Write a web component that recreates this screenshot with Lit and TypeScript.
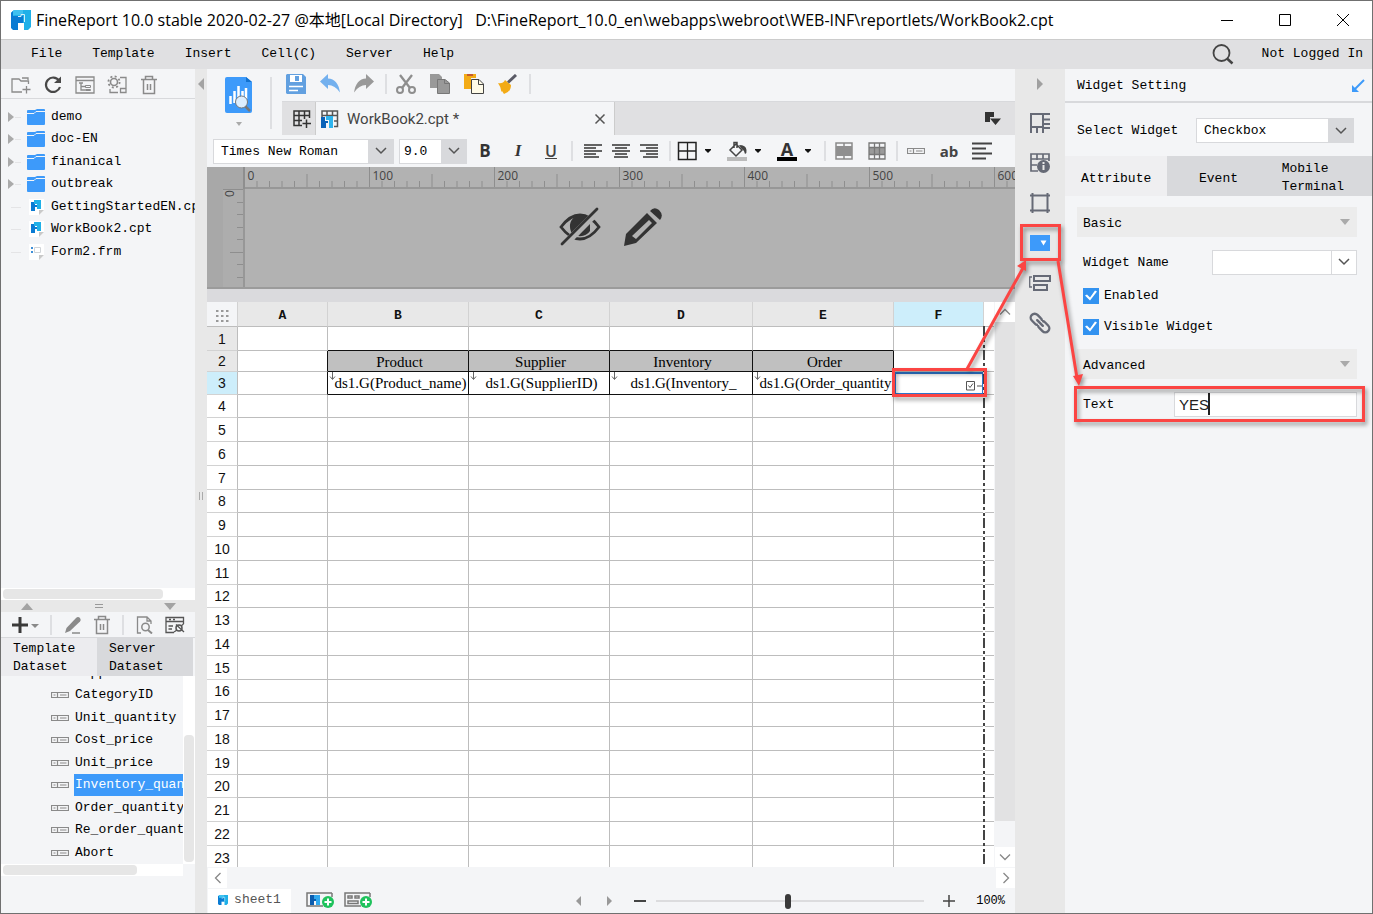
import { LitElement, html, css, svg, nothing } from "lit";
import { customElement, state } from "lit/decorators.js";
import { classMap } from "lit/directives/class-map.js";

const ico = (w: number, h: number, body: unknown) =>
  html`<svg width=${w} height=${h} viewBox="0 0 ${w} ${h}" fill="none" aria-hidden="true">${body}</svg>`;

const logoBody = svg`
  <path fill="#1fb0e8" d="M3 0H20V17L17 20H13V13H7L0 6V3Z"/>
  <path fill="#3fc1f0" d="M3 0H12V5H4L0 6V3Z"/>
  <path fill="#0a7bd3" d="M0 3 2 1V6H12V13H7V20H2L0 18Z"/>
  <path fill="none" stroke="#d5effb" stroke-width="1" d="M7 6.500H10V4.500H13.500V12"/>`;
const logo = (s: number) =>
  html`<svg width=${s} height=${s} viewBox="0 0 20 20" aria-hidden="true">${logoBody}</svg>`;

const chevron = html`<svg class="chev" width="12" height="8" viewBox="0 0 12 8" fill="none" aria-hidden="true"><path d="M1 1 6 6 11 1" stroke="#555" stroke-width="1.5"/></svg>`;
const caret = ico(10, 6, svg`<path d="M2 1H8V2L5 5 2 2Z" fill="#111"/>`);

const folderIcon = ico(18, 16, svg`<path fill="#3d9afa" d="M0 2Q0 1 1 1H8L10 0H17Q18 0 18 1V15Q18 16 17 16H1Q0 16 0 15Z"/><path stroke="#f4f5f7" d="M0 4.500H7L9 2.500H18"/>`);
const cptIcon = ico(16, 16, svg`<path fill="#fff" d="M1 0H16V11L11 16H1Z"/><path fill="#c9c9c9" d="M16 11 11 16V11Z"/>
  <path fill="#0a7bd3" d="M3 3H7V6H9V8H7V12H3Z"/><path fill="#1fb0e8" d="M6 1H13V10H9V5H6Z"/>`);
const frmIcon = ico(16, 16, svg`<path fill="#fff" d="M1 0H16V11L11 16H1Z"/><path fill="#c9c9c9" d="M16 11 11 16V11Z"/>
  <path fill="#3d8fd8" d="M3 3H5V5H3ZM3 7H5V9H3Z"/><path stroke="#d0d4d8" d="M6.500 3.500H12.500V8.500H6.500Z"/>`);
const fieldIcon = ico(18, 8, svg`<path stroke="#8a8a8a" stroke-width="1.200" d="M.5 1.500H17.500V6.500H.5ZM6.500 1.500V6.500M2.500 4H4.500M9 4H15.500"/>`);
const trashIcon = ico(18, 20, svg`<path stroke="#8a8a8a" stroke-width="1.500" d="M1 4.500H17M5.500 4V1.500H12.500V4M3.500 5V18.500H14.500V5M7.500 9V15M10.500 9V15"/>`);

const icons = {
  newFolder: ico(20, 18, svg`<path stroke="#8a8a8a" stroke-width="1.300" d="M11 16H1V3H8L10 5H17.500V8M11 2H17V4M15.500 10V17.500M11.500 13.500H19.500"/>`),
  refresh: ico(20, 20, svg`<path stroke="#484848" stroke-width="2.200" d="M16 5.500A7.200 7.200 0 1 0 17 12"/><path fill="#484848" d="M18 1.500V8H11Z"/>`),
  treeView: ico(20, 18, svg`<path stroke="#8a8a8a" stroke-width="1.300" d="M1 1H19V17H1ZM1 4.500H19M6 7V14H10M6 10.500H11M4 7H8"/><path stroke="#8a8a8a" d="M10.500 9.500H15.500V11.500H10.500ZM10.500 13.500H15.500V14.500H10.500Z"/>`),
  gear: ico(20, 20, svg`<circle cx="7" cy="7" r="3.500" stroke="#8a8a8a" stroke-width="1.600"/><circle cx="7" cy="7" r="5.600" stroke="#8a8a8a" stroke-width="1.800" stroke-dasharray="2 2.400"/><path stroke="#8a8a8a" stroke-width="1.300" d="M13 2.500H19V17.500H13.500V13.500H19M3 14V17.500H11"/>`),
  plus: ico(28, 18, svg`<path stroke="#3a3a3a" stroke-width="3" d="M9 1V17M1 9H17"/><path fill="#8a8a8a" d="M20 8H28L24 12Z"/>`),
  pen: ico(18, 18, svg`<path fill="#8a8a8a" d="M1 17 2.500 12 12 2Q14 0 16 2 17.500 4 16 5.500L6 15Z"/><path stroke="#8a8a8a" stroke-width="1.500" d="M8 17H16"/>`),
  docSearch: ico(18, 18, svg`<path stroke="#8a8a8a" stroke-width="1.300" d="M5 17H1.500V1H11L15 5V8M11 1V5H15"/><circle cx="9.500" cy="11" r="3.700" stroke="#8a8a8a" stroke-width="1.500"/><path stroke="#8a8a8a" stroke-width="2" d="M12 14 16 17.500"/>`),
  dbLink: ico(20, 18, svg`<path stroke="#555" stroke-width="1.300" d="M18.500 8V1.500H1V16.500H9M1 5.500H18M3.500 10H8M3.500 13H7M4 3.500H6M8 3.500H10"/><circle cx="14" cy="12" r="3" stroke="#555" stroke-width="1.500"/><path stroke="#555" stroke-width="1.300" d="M9 16 12 14M11 8.500 19 16M16 10 18.500 8"/>`),
  save: ico(20, 20, svg`<path fill="#62a0e0" d="M1 0H17L20 3V20H1L0 19V1Z"/><path fill="#fff" d="M4 1H16V8H4Z"/><path fill="#62a0e0" d="M9 2H13V7H9Z"/><path stroke="#fff" stroke-width="1.500" d="M3 12.500H17M3 16.500H12"/>`),
  undo: ico(20, 20, svg`<path fill="#73b0ee" d="M0 7.500 8 0V4.500Q18 5 20 18.500 15 11 8 11V15Z"/>`),
  redo: ico(20, 20, svg`<path fill="#999" d="M20 7.500 12 0V4.500Q2 5 0 18.500 5 11 12 11V15Z"/>`),
  cut: ico(20, 20, svg`<circle cx="4" cy="16" r="3" stroke="#8e8e8e" stroke-width="2"/><circle cx="16" cy="16" r="3" stroke="#8e8e8e" stroke-width="2"/><path stroke="#8e8e8e" stroke-width="2.300" d="M4 1 14 14M16 1 6 14"/>`),
  copy: ico(20, 20, svg`<path fill="#999" d="M0 0H9L12 3V14H0Z"/><path fill="#999" stroke="#777" d="M7.500 5.500H15L19.500 9V19.500H7.500Z"/><path stroke="#777" d="M14.500 6V9.500H19"/>`),
  paste: ico(20, 20, svg`<path fill="#f3ab16" d="M0 0H12V4H7V15H0Z"/><path fill="#c55b2c" d="M3 0H9V2H3Z"/><path fill="#fffbe8" stroke="#444" d="M7.500 5.500H15L19.500 10V19.500H7.500Z"/><path stroke="#444" d="M14.500 6V10.500H19"/>`),
  brush: ico(20, 20, svg`<path fill="#f3ab16" d="M0 9Q5 10 7 6L13 11Q13 18 6 20L4 17 3.500 18Q3 13 0 9Z"/><path stroke="#5a5a66" stroke-width="3" d="M10 8.500 18 1"/>`),
  gridAdd: ico(18, 18, svg`<path stroke="#333" stroke-width="1.500" d="M9 15.500H1V1H16.500V8M1 5.500H16.500M1 10.500H9M6 1V15.500M11.500 1V9M13.500 9.500V18M9.500 13.500H18"/>`),
  gridFile: ico(18, 18, svg`<path stroke="#555" stroke-width="1.500" d="M1 7V1H16.500V16.500H13M1 5.500H16.500M6 1V6M11.500 1V6M13 11H16.500"/><path fill="#0b62b8" d="M0 7H4V11H7V13H5V18H0Z"/><path fill="#2fb4ee" d="M5 6H12V18H8V10H5Z"/>`),
  alignL: ico(18, 16, svg`<path stroke="#333" stroke-width="1.300" d="M0 2H18M0 5H12M0 8H18M0 11H12M0 14H15"/>`),
  alignC: ico(18, 16, svg`<path stroke="#333" stroke-width="1.300" d="M0 2H18M3 5H15M0 8H18M3 11H15M2 14H16"/>`),
  alignR: ico(18, 16, svg`<path stroke="#333" stroke-width="1.300" d="M0 2H18M6 5H18M0 8H18M6 11H18M3 14H18"/>`),
  border: ico(20, 20, svg`<path stroke="#222" stroke-width="1.500" d="M1.500 1.500H19V18.500H1.500Z"/><path stroke="#222" stroke-width="1.300" d="M10.500 1V19M2 10H19"/>`),
  fill: ico(20, 20, svg`<path stroke="#444" stroke-width="1.500" d="M9 3 3 9 9 15 15 9ZM7 7V1.500H10V7"/><path fill="#444" d="M12 4Q19 4 19.500 9 20 12 18 13 17 9 14 7Z"/><path fill="#bbb" d="M0 16H20V20H0Z"/>`),
  merge: ico(18, 18, svg`<path stroke="#8a8a8a" stroke-width="1.500" d="M1 1H17V17H1ZM9 1V4M9 14V17"/><path fill="#8f8f8f" d="M1 4H17V14H1Z"/>`),
  unmerge: ico(18, 18, svg`<path fill="#9a9a9a" d="M1 5H17V13H1Z"/><path stroke="#777" stroke-width="1.300" d="M1 1H17V17H1ZM1 5.500H17M1 12.500H17M6.500 1V17M11.500 1V17"/>`),
  para: ico(20, 18, svg`<path stroke="#444" stroke-width="2" d="M0 1.500H20M0 6.500H14M0 11.500H20M0 16.500H14"/>`),
  tabMenu: ico(16, 14, svg`<path fill="#333" d="M0 0H9V5H5V10H0ZM5 6.500H16L10.500 13Z"/>`),
  close: ico(12, 12, svg`<path stroke="#555" stroke-width="1.500" d="M1.500 1.500 10.500 10.500M10.500 1.500 1.500 10.500"/>`),
};

const railIcons = [
  ["Cell attributes", ico(22, 22, svg`<path stroke="#666a76" stroke-width="2" d="M21 2H2V21M2 15H14V2M14 7.500H21M14 12H21M14 16H21M8 15V21M14 15V21"/>`)],
  ["Cell elements", ico(22, 22, svg`<path stroke="#666a76" stroke-width="1.700" d="M9 19H2V2H20V9M2 7H20M2 13H8M8 2V8M14 2V7"/><circle cx="14.500" cy="14.500" r="6.500" fill="#666a76"/><path stroke="#e8e8e8" stroke-width="2" d="M14.500 13V18M14.500 10V12"/>`)],
  ["Floating elements", ico(22, 22, svg`<path stroke="#666a76" stroke-width="2" d="M1 3.500H21M1 18.500H21M3.500 1V21M18.500 1V21"/>`)],
  ["Widget settings", ico(20, 16, svg`<path fill="#3d9afa" d="M0 0H20V16H0Z"/><path fill="#fff" d="M10.500 5.500H16.500L13.500 10.500Z"/>`)],
  ["Condition attributes", ico(22, 18, svg`<path stroke="#666a76" stroke-width="1.300" d="M3 3H.7V13H3"/><path stroke="#666a76" stroke-width="2" d="M5 2H21V7H5ZM5 11H18V16H5Z"/>`)],
  ["Hyperlink", ico(22, 22, svg`<g stroke="#666a76" stroke-width="2.400" stroke-linecap="round" transform="rotate(45 11 11)"><path d="M10 7.500A3.500 3.500 0 0 0 8 7H3.500A4 4 0 0 0 3.500 15H8A3.500 3.500 0 0 0 10 14.500M12 7.500A3.500 3.500 0 0 1 14 7H18.500A4 4 0 0 1 18.500 15H14A3.500 3.500 0 0 1 12 14.500M7 11H15"/></g>`)],
] as const;

const COLS = ["A", "B", "C", "D", "E", "F"];
const CELLS: Record<string, string> = {
  B2: "Product", C2: "Supplier", D2: "Inventory", E2: "Order",
  B3: "ds1.G(Product_name)", C3: "ds1.G(SupplierID)", D3: "ds1.G(Inventory_", E3: "ds1.G(Order_quantity",
};
const FIELDS = ["SupplierID", "CategoryID", "Unit_quantity", "Cost_price", "Unit_price", "Inventory_quantity", "Order_quantity", "Re_order_quantity", "Abort"];
const TREE = [
  ["demo", "dir"], ["doc-EN", "dir"], ["finanical", "dir"], ["outbreak", "dir"],
  ["GettingStartedEN.cpt", "cpt"], ["WorkBook2.cpt", "cpt"], ["Form2.frm", "frm"],
];

@customElement("app-root")
export class AppRoot extends LitElement {
  @state() private field = "Inventory_quantity";

  static styles = css`
    :host { display: block; height: 100vh; font: 13px/18px "Liberation Mono", "Noto Sans CJK SC", monospace; color: #000; }
    *, *::before, *::after { box-sizing: border-box; }
    button { font: inherit; color: inherit; background: none; border: 0; padding: 0; margin: 0; white-space: nowrap; }
    button, .center { display: flex; align-items: center; justify-content: center; }
    input, select { font: inherit; color: inherit; margin: 0; border-radius: 0; min-width: 0; }
    svg { display: block; flex: none; }
    ul { list-style: none; margin: 0; padding: 0; }
    .window { height: 100%; display: flex; flex-direction: column; border: 1px solid #707070; background: #f4f5f7; position: relative; overflow: hidden; }
    .title { height: 38px; display: flex; align-items: center; padding-left: 10px; gap: 5px; background: #fff; font: 16px/20px "Open Sans", "Noto Sans CJK SC", sans-serif; white-space: pre; }
    .title .caption { flex: 1; }
    .wbtn { width: 58px; height: 38px; }
    .menu { height: 30px; display: flex; align-items: center; gap: 30px; padding: 0 9px 2px 30px; background: #e0e0e2; border-top: 1px solid #ccc; }
    .menu .grow { flex: 1; }
    .menu .login { gap: 28px; }
    .body { flex: 1; display: flex; min-height: 0; }

    .left { width: 194px; display: flex; flex-direction: column; min-height: 0; }
    .ltools { height: 30px; display: flex; align-items: center; gap: 12px; padding: 3px 10px 0; border-bottom: 1px solid #d8d9dc; }
    .ltools button { width: 20px; }
    .tree { flex: 1; padding: 6px 0 0 6px; overflow: hidden; }
    .node { height: 23px; width: 100%; justify-content: flex-start; overflow: hidden; }
    li:nth-child(even) .node { height: 22px; }
    .twist { flex: none; width: 20px; }
    .nicon { flex: none; width: 18px; margin-right: 6px; display: flex; justify-content: center; }
    .hscroll { height: 12px; background: #fff; padding: 1px 2px; }
    .thumb { height: 10px; border-radius: 4px; background: #e6e6e6; }
    .w160 { width: 160px; } .w134 { width: 134px; }
    .hsplit { height: 12px; background: #e8e8e8; display: flex; align-items: center; justify-content: space-between; padding: 0 18px 0 19px; }
    .dtools { height: 26px; display: flex; align-items: center; padding: 0 10px 0 10px; justify-content: space-between; border-bottom: 1px solid #d8d9dc; }
    .sep { flex: none; width: 2px; height: 20px; background: #dedfe2; }
    .dtabs { display: grid; grid-template-columns: 1fr 1fr; height: 38px; padding-right: 2px; }
    .dtab { justify-content: flex-start; text-align: left; padding: 2px 0 0 12px; background: #ececef; }
    .dtab.off { background: #d8d9dc; }
    .fields { height: 188px; display: flex; }
    .fieldlist { flex: 1; min-width: 0; overflow: hidden; display: flex; flex-direction: column; justify-content: flex-end; }
    .fieldlist .node { padding-left: 50px; gap: 5px; }
    .fname { padding: 2px 0 2px 1px; height: 22px; }
    .fname.on { background: #3d9afa; color: #fff; }
    .vscroll { width: 12px; background: #fff; padding: 59px 1px 2px; }
    .vscroll .bar { height: 100%; border-radius: 4px; background: #e6e6e6; }
    .lfoot { height: 37px; }
    .hend { margin-right: 12px; }
    .vsplit { width: 12px; background: #e8e8e8; display: flex; flex-direction: column; align-items: center; padding-top: 9px; }
    .vsplit .grip { margin-top: 402px; }

    .main { flex: 1; min-width: 0; display: flex; flex-direction: column; }
    .head { display: flex; height: 66px; }
    .preview { width: 75px; display: flex; align-items: flex-start; padding: 8px 0 0 18px; }
    .preview button { flex-direction: column; gap: 9px; }
    .preview .sep { height: 52px; margin-left: 18px; }
    .headr { flex: 1; min-width: 0; display: flex; flex-direction: column; }
    .tools { height: 32px; display: flex; align-items: center; gap: 14px; padding: 0 4px 2px; }
    .tools .sep { margin: 0 -5px 0 -3px; }
    .tabs { flex: 1; display: flex; background: #e0e0e2; border-top: 1px solid #d8d9dc; }
    .tabs .new { width: 34px; padding-left: 6px; border-right: 1px solid #ccc; }
    .tab { flex: 0 1 299px; display: flex; align-items: center; gap: 8px; padding: 0 8px 0 5px; background: #f4f5f7; border-right: 1px solid #ccc; font: 15px/20px Roboto, sans-serif; color: #444; }
    .tab span, .tabs .grow { flex: 1; }
    .tabs .more { padding-right: 14px; }
    .fmt { height: 32px; display: flex; align-items: center; padding-left: 6px; }
    .combo { display: grid; grid-template-columns: 1fr 25px; height: 25px; border: 1px solid #d8d9dc; background: #fff; }
    .combo select, .combo input { grid-area: 1 / 1 / 2 / 3; appearance: none; border: 0; background: none; padding: 1px 0 0 7px; outline: 0; width: 100%; height: 100%; }
    .combo .drop { grid-area: 1 / 2; background: #d8d9dc; pointer-events: none; }
    .combo.plain .drop { background: #fff; border-left: 1px solid #d8d9dc; }
    .w180 { width: 181px; } .w68 { width: 68px; margin-left: 5px; } .w68 select { padding-left: 4px; }
    .grp { display: flex; align-items: center; }
    .grp button { min-width: 18px; height: 24px; }
    .g13 { gap: 13px; padding: 0 10px 0 8px; } .g13 button { width: 20px; }
    .g10 { gap: 10px; padding: 0 11px 0 11px; }
    .g14 { gap: 14px; padding: 0 11px 0 6px; } .g14 button { gap: 6px; }
    .g12 { gap: 13px; padding: 0 9px 0 8px; } .g12 button { width: 20px; }
    .bold { font: bold 17px/20px "Open Sans", sans-serif; color: #333; }
    .ital { font: italic bold 17px/20px "Liberation Serif", serif; color: #333; }
    .under { font: 600 16px/20px "Open Sans", sans-serif; text-decoration: underline; color: #444; }
    .ab { font: bold 15px/20px "Open Sans", sans-serif; color: #444; }
    .fontc { display: flex; flex-direction: column; align-items: center; width: 20px; font: bold 18px/16px "Open Sans", sans-serif; color: #333; border-bottom: 4px solid #000; }

    .canvas { height: 122px; background: #b2b2b2; border-bottom: 2px solid #9b9b9b; display: grid; grid-template: 22px 1fr / 38px 1fr; }
    .canvas > * { overflow: hidden; }
    .rt { font: 12px "Open Sans", sans-serif; fill: #444; }
    .corner { background: #a8a8a8; border-right: 2px solid #8e8e8e; }
    .rtop { border-bottom: 2px solid #979797; }
    .rside { border-right: 2px solid #979797; background: linear-gradient(90deg, #a8a8a8 16px, #adadad 16px); }
    .parts { gap: 22px; padding-bottom: 22px; padding-right: 38px; }
    .band { height: 13px; background: #dadadd; }
    .sheet { flex: 1; min-height: 0; display: flex; }
    .gridwrap { flex: 1; min-width: 0; overflow: hidden; position: relative; background: #fff; }
    table { border-collapse: separate; border-spacing: 0; table-layout: fixed; width: 100%; }
    th, td { padding: 0; height: 24px; border-right: 1px solid #bdbdbd; border-bottom: 1px solid #bdbdbd; overflow: hidden; white-space: nowrap; text-align: center; line-height: 18px; }
    th { font-weight: normal; color: #111; }
    thead th { background: #e8e8e8; font-weight: bold; height: 25px; padding-top: 3px; border-right-color: #d2d2d2; }
    tbody th { font-family: "Liberation Sans", sans-serif; font-size: 14px; background: #fff; border-bottom-color: #d2d2d2; }
    tbody th.near { background: #e8e8e8; }
    tbody tr:nth-child(4n) > * { height: 23px; }
    tbody tr.r2 > * { height: 21px; } tbody tr.r3 > * { height: 23px; }
    thead th.sel, tbody th.sel { background: #cdeefb; }
    thead th.rest { background: #fff; }
    thead th.all { background: #f4f5f7; }
    th.all svg { margin: 0 auto; }
    td { font: 15px/18px "Liberation Serif", serif; }
    td.hd { background: #c0c0c0; padding: 1px 0 0 3px; }
    td.kr { border-right-color: #111; } td.kb { border-bottom-color: #111; }
    td.rest, th.rest { border-right: 0; }
    td.ds { position: relative; padding-left: 5px; }
    td.ds svg { position: absolute; left: 1px; top: 0; }
    .c0 { width: 31px; } .cs { width: 90px; } .cm { width: 141px; } .cd { width: 143px; } .cr { width: auto; }
    td.pick { border: 2px solid #2e77d0; padding-right: 0; }
    td.pick svg { margin-left: auto; margin-top: 5px; }
    .pagebreak { position: absolute; top: 24px; bottom: 0; left: 776px; width: 2px; background: repeating-linear-gradient(#444 0 10px, #fff 10px 13px, #444 13px 16px, #fff 16px 19px, #444 19px 22px, #fff 22px 24px); }
    .vs { width: 21px; display: flex; flex-direction: column; background: #f4f5f7; padding-left: 1px; }
    .vs button { height: 20px; background: #fff; }
    .vs .bar { flex: 1; background: #e2e2e3; margin-bottom: 26px; }
    .hs { height: 22px; display: flex; justify-content: space-between; padding: 1px 0 0 1px; }
    .hs button { width: 19px; height: 20px; background: #fff; }
    .foot { height: 24px; display: flex; align-items: center; padding: 0 10px 0 1px; }
    .stab { width: 83px; height: 24px; gap: 6px; padding-bottom: 3px; background: #fff; color: #555; }
    .foot .grow { flex: 1; }
    .adds { gap: 10px; margin-left: 15px; padding-bottom: 3px; display: flex; }
    .nav { gap: 24px; display: flex; margin-right: 20px; }
    .zoom { display: flex; align-items: center; gap: 9px; }
    .zoom input { appearance: none; width: 268px; height: 16px; background: linear-gradient(#dcdcde, #dcdcde) center / 100% 2px no-repeat; }
    .zoom input::-webkit-slider-thumb { appearance: none; width: 6px; height: 15px; border-radius: 3px; background: #3a3a3a; }
    .pct { margin-left: 20px; font-size: 12px; }

    .rail { width: 50px; background: #e8e8e8; display: flex; flex-direction: column; align-items: center; padding-top: 4px; }
    .rail button { width: 40px; height: 40px; }
    .rail .fold { height: 22px; margin-bottom: 8px; }
    .right { width: 307px; }
    .rhead { height: 34px; display: flex; justify-content: space-between; align-items: center; padding: 2px 7px 0 12px; border-bottom: 2px solid #d8d9dc; }
    .rsel { height: 53px; display: flex; align-items: center; justify-content: space-between; padding: 2px 18px 0 12px; }
    .rsel .combo { width: 158px; }
    .rtabs { height: 38px; display: grid; grid-template-columns: 1fr 1fr 1fr; }
    .rtab { background: #d8d9dc; text-align: left; padding-top: 6px; }
    .rtab.on { background: #efeff1; }
    .rtab.two { justify-content: flex-start; padding: 4px 0 0 12px; }
    .props { padding: 13px 15px 0 12px; display: grid; }
    .sec { height: 30px; background: #ececec; justify-content: space-between; padding: 4px 6px 0; }
    .sec svg { margin-bottom: 4px; }
    .prop { display: flex; align-items: center; justify-content: space-between; padding-left: 6px; height: 50px; }
    .prop > label { padding-top: 2px; }
    .prop .combo { width: 145px; }
    .tick { display: flex; align-items: center; gap: 5px; height: 31px; padding-left: 6px; }
    .tick input { appearance: none; width: 16px; height: 16px; background: #3292f0; }
    .tick input:checked::before { content: ""; display: block; width: 16px; height: 16px; background: #fff; clip-path: polygon(2px 8px, 4px 7px, 7px 10px, 12px 3px, 14px 4px, 7px 13px); }
    .ticks { padding-bottom: 7px; margin-top: -7px; }
    .prop .txt { width: 183px; height: 25px; border: 1px solid #d8d9dc; background: #fff; padding: 0 4px; font: 15px/20px "Liberation Sans", sans-serif; color: #222; outline: 0; }
    .caretbox { display: grid; }
    .caretbox > * { grid-area: 1 / 1; }
    .caretbox .cur { width: 2px; height: 22px; background: #222; margin: 1px 0 0 34px; }
    .notes { position: absolute; left: -1px; top: -1px; pointer-events: none; filter: drop-shadow(2px 3px 2px #0006); }
  `;

  private cell(c: string, r: number) {
    const key = c + r;
    const text = CELLS[key];
    const boxed = r === 2 || r === 3;
    const mid = "BCDE".includes(c);
    const cls = {
      hd: r === 2 && mid, ds: r === 3 && mid,
      kr: boxed && c !== "F", kb: mid && r <= 3, pick: key === "F3",
    };
    return html`<td class=${classMap(cls)}>${r === 3 && mid ? ico(7, 9, svg`<path stroke="#666" d="M3.500 0V7M1 4.500 3.500 7.500 6 4.500"/>`) : nothing}${key === "F3"
      ? ico(16, 10, svg`<path stroke="#555" d="M.5.5H8.500V9H.5ZM2.500 4.500 4 6.500 7 2.500M11 5H16"/>`)
      : text ?? nothing}</td>`;
  }

  private combo(id: string, value: string, extra: string, label: string) {
    return html`<div class="combo ${extra}"><select id=${id} aria-label=${label}><option>${value}</option></select><span class="drop center">${chevron}</span></div>`;
  }

  private tool(label: string, icon: unknown) {
    return html`<button aria-label=${label}>${icon}</button>`;
  }

  private left() {
    const glyph: Record<string, unknown> = { dir: folderIcon, cpt: cptIcon, frm: frmIcon };
    return html`<aside class="left">
      <div class="ltools">
        ${this.tool("New folder", icons.newFolder)}${this.tool("Refresh", icons.refresh)}${this.tool("Tree view", icons.treeView)}
        ${this.tool("Configure", icons.gear)}${this.tool("Delete", trashIcon)}
      </div>
      <ul class="tree">${TREE.map(([name, kind]) => html`<li><button class="node">
        <span class="twist">${kind === "dir" ? ico(14, 12, svg`<path fill="#aaa" d="M1 1 7 6 1 11Z"/><path stroke="#e4e4e6" d="M8 6.500H14"/>`) : ico(14, 12, svg`<path stroke="#e4e4e6" d="M4 6.500H14"/>`)}</span>
        <span class="nicon">${glyph[kind]}</span>${name}</button></li>`)}</ul>
      <div class="hscroll"><div class="thumb w160"></div></div>
      <div class="hsplit">
        ${ico(14, 7, svg`<path fill="#a3a3a3" d="M7 0 13 7H1Z"/>`)}
        ${ico(8, 6, svg`<path stroke="#999" d="M0 1.500H8M0 4.500H8"/>`)}
        ${ico(14, 7, svg`<path fill="#a3a3a3" d="M1 0H13L7 7Z"/>`)}
      </div>
      <div class="dtools">
        ${this.tool("Add dataset", icons.plus)}<span class="sep"></span>${this.tool("Edit dataset", icons.pen)}${this.tool("Delete dataset", trashIcon)}<span class="sep"></span>${this.tool("Preview dataset", icons.docSearch)}${this.tool("Connections", icons.dbLink)}
      </div>
      <div class="dtabs"><button class="dtab">Template<br>Dataset</button><button class="dtab off">Server<br>Dataset</button></div>
      <div class="fields">
        <ul class="fieldlist">${FIELDS.map((f) => html`<li><button class="node" @click=${() => (this.field = f)}>${fieldIcon}<span class=${classMap({ fname: true, on: f === this.field })}>${f}</span></button></li>`)}</ul>
        <div class="vscroll"><div class="bar"></div></div>
      </div>
      <div class="hscroll hend"><div class="thumb w134"></div></div>
      <div class="lfoot"></div>
    </aside>`;
  }

  private rulerTop() {
    const ticks = Array.from({ length: 100 }, (_, i) => i);
    return html`<svg class="rtop" width="100%" height="22" aria-hidden="true">${ticks.map((i) => {
      const x = i * 12.5 - 0.5;
      const top = i % 10 === 0 ? 0 : i % 5 === 0 ? 7 : 14;
      return svg`<path d="M${x} ${top}V22" stroke="#8e8e8e"/>${i % 10 === 0 ? svg`<text class="rt" x=${x + 3} y="13">${i * 10}</text>` : nothing}`;
    })}</svg>`;
  }

  private rulerSide() {
    const ticks = Array.from({ length: 8 }, (_, i) => i);
    return html`<svg class="rside" width="38" height="100%" aria-hidden="true">${ticks.map((i) =>
      svg`<path d="M${i === 0 ? 16 : i % 5 === 0 ? 23 : 30} ${Math.round(i * 12.5)}.5H38" stroke="#8e8e8e"/>`)}<text class="rt" x="-8" y="27" transform="rotate(-90)">0</text></svg>`;
  }

  private center() {
    return html`<main class="main">
      <div class="head">
        <div class="preview">
          <button aria-label="Preview">${ico(27, 36, svg`<path fill="#3d9afa" d="M2 0H21L27 5V34Q27 36 25 36H2Q0 36 0 34V2Q0 0 2 0Z"/><path fill="#1272cf" d="M21 0 27 5H21Z"/><path stroke="#fff" stroke-width="2.500" d="M5.500 27V19M9.500 26V14M13.500 22V9M17.500 20V14M21 22V11"/><circle cx="16.500" cy="25" r="6" fill="#dceeff" stroke="#777"/><path stroke="#777" stroke-width="2.500" d="M20.500 29.500 25 34"/>`)}${ico(8, 5, svg`<path fill="#aaa" d="M1 0H7L4 4Z"/>`)}</button>
          <span class="sep"></span>
        </div>
        <div class="headr">
          <div class="tools">
            ${this.tool("Save", icons.save)}${this.tool("Undo", icons.undo)}${this.tool("Redo", icons.redo)}<span class="sep"></span>
            ${this.tool("Cut", icons.cut)}${this.tool("Copy", icons.copy)}${this.tool("Paste", icons.paste)}${this.tool("Format brush", icons.brush)}<span class="sep"></span>
          </div>
          <div class="tabs">
            <button class="new" aria-label="New template">${icons.gridAdd}</button>
            <div class="tab">${icons.gridFile}<span>WorkBook2.cpt *</span><button aria-label="Close tab">${icons.close}</button></div>
            <span class="grow"></span><button class="more" aria-label="All templates">${icons.tabMenu}</button>
          </div>
        </div>
      </div>
      <div class="fmt">
        ${this.combo("font", "Times New Roman", "w180", "Font")}${this.combo("size", "9.0", "w68", "Font size")}
        <div class="grp g13"><button class="bold">B</button><button class="ital">I</button><button class="under">U</button></div><span class="sep"></span>
        <div class="grp g10">${this.tool("Align left", icons.alignL)}${this.tool("Align center", icons.alignC)}${this.tool("Align right", icons.alignR)}</div><span class="sep"></span>
        <div class="grp g14"><button aria-label="Borders">${icons.border}${caret}</button><button aria-label="Fill color">${icons.fill}${caret}</button><button aria-label="Font color"><span class="fontc">A</span>${caret}</button></div><span class="sep"></span>
        <div class="grp g12">${this.tool("Merge", icons.merge)}${this.tool("Unmerge", icons.unmerge)}</div><span class="sep"></span>
        <div class="grp g12">${this.tool("Bind field", fieldIcon)}<button class="ab">ab</button>${this.tool("Rich text", icons.para)}</div>
      </div>
      <div class="canvas">
        <div class="corner"></div>${this.rulerTop()}${this.rulerSide()}
        <div class="parts center">
          ${ico(42, 40, svg`<path stroke="#333" stroke-width="2.800" d="M2 20Q11 8 21 8 31 8 40 20 31 32 21 32 11 32 2 20Z"/><path fill="#333" d="M21 8A11 11 0 0 0 11 20Q11 25 15 28L31 12Q27 8 21 8Z"/><path fill="#333" d="M31 16 19 29Q27 30 31 24Z"/><path stroke="#b2b2b2" stroke-width="7" d="M4 39 41 2"/><path stroke="#333" stroke-width="2.800" stroke-linecap="round" d="M3 37 38 2"/>`)}
          ${ico(40, 40, svg`<path fill="#333" fill-rule="evenodd" d="M1 39 3 27 24 6 34 16 13 36ZM9 29 13 32 29 16 26 13Z"/><path fill="#333" d="M27 4Q31-1 36 3 41 8 37 13Z"/>`)}
        </div>
      </div>
      <div class="band"></div>
      <div class="sheet">
        <div class="gridwrap">
          <table>
            <colgroup><col class="c0"><col class="cs"><col class="cm"><col class="cm"><col class="cd"><col class="cm"><col class="cs"><col class="cr"></colgroup>
            <thead><tr><th class="all">${ico(14, 12, svg`<path stroke="#999" stroke-width="2" stroke-dasharray="2.500 2.500" d="M1 1H14M1 6H14M1 11H14"/>`)}</th>
              ${COLS.map((c) => html`<th class=${classMap({ sel: c === "F" })}>${c}</th>`)}<th class="rest"></th></tr></thead>
            <tbody>${Array.from({ length: 23 }, (_, i) => i + 1).map((r) => html`<tr class="r${r}"><th class=${classMap({ near: r < 3, sel: r === 3 })}>${r}</th>${COLS.map((c) => this.cell(c, r))}<td class="rest"></td></tr>`)}</tbody>
          </table>
          <div class="pagebreak"></div>
        </div>
        <div class="vs"><button aria-label="Scroll up">${ico(12, 8, svg`<path d="M1 6.500 6 1.500 11 6.500" stroke="#888" stroke-width="1.300"/>`)}</button><div class="bar"></div><button aria-label="Scroll down">${ico(12, 8, svg`<path d="M1 1.500 6 6.500 11 1.500" stroke="#888" stroke-width="1.300"/>`)}</button></div>
      </div>
      <div class="hs"><button aria-label="Scroll left">${ico(8, 12, svg`<path d="M6.500 1 1.500 6 6.500 11" stroke="#888" stroke-width="1.300"/>`)}</button><button aria-label="Scroll right">${ico(8, 12, svg`<path d="M1.500 1 6.500 6 1.500 11" stroke="#888" stroke-width="1.300"/>`)}</button></div>
      <div class="foot">
        <button class="stab">${logo(10)}sheet1</button>
        <div class="adds">
          <button aria-label="Add sheet">${ico(28, 16, svg`<path stroke="#777" stroke-width="1.500" d="M26 1H1V14H17M26 1V5"/><path fill="#0b5cae" d="M4 3H8V7H10V9H8V13H4Z"/><path fill="#2fa8ee" d="M8 3H14V13H10V7H8Z"/><circle cx="22" cy="10" r="6" fill="#1fc25c"/><path stroke="#fff" stroke-width="2" d="M22 6.500V13.500M18.500 10H25.500"/>`)}</button>
          <button aria-label="Add form sheet">${ico(28, 16, svg`<path stroke="#777" stroke-width="1.500" d="M26 1H1V14H17M26 1V5M4 4H8V6H4ZM11 4H15V6H11ZM4 9H14V11.500H4Z"/><circle cx="22" cy="10" r="6" fill="#1fc25c"/><path stroke="#fff" stroke-width="2" d="M22 6.500V13.500M18.500 10H25.500"/>`)}</button>
        </div>
        <span class="grow"></span>
        <div class="nav"><button aria-label="Previous sheet">${ico(7, 10, svg`<path fill="#999" d="M6 0V10L1 5Z"/>`)}</button><button aria-label="Next sheet">${ico(7, 10, svg`<path fill="#999" d="M1 0V10L6 5Z"/>`)}</button></div>
        <div class="zoom"><button aria-label="Zoom out">${ico(14, 14, svg`<path d="M1 7H13" stroke="#444" stroke-width="2"/>`)}</button>
          <input type="range" min="10" max="400" value="201" aria-label="Zoom">
          <span></span><button aria-label="Zoom in">${ico(14, 14, svg`<path d="M1 7H13M7 1V13" stroke="#444" stroke-width="1.500"/>`)}</button></div>
        <span class="pct">100%</span>
      </div>
    </main>`;
  }

  private right() {
    const tri = ico(12, 6, svg`<path fill="#aaa" d="M1 0H11L6 6Z"/>`);
    return html`<nav class="rail">
        <button class="fold" aria-label="Collapse panel">${ico(8, 12, svg`<path fill="#a0a0a0" d="M1 0 7 6 1 12Z"/>`)}</button>
        ${railIcons.map(([label, icon]) => this.tool(label, icon))}
      </nav>
      <aside class="right">
        <div class="rhead"><span>Widget Setting</span><button aria-label="Detach">${ico(14, 14, svg`<path stroke="#3d9afa" stroke-width="2" d="M13 1 3 11"/><path fill="#3d9afa" d="M1 6 8 13H1Z"/>`)}</button></div>
        <div class="rsel"><label for="widget">Select Widget</label>${this.combo("widget", "Checkbox", "", "Select Widget")}</div>
        <div class="rtabs"><button class="rtab on">Attribute</button><button class="rtab">Event</button><button class="rtab two">Mobile<br>Terminal</button></div>
        <div class="props">
          <button class="sec">Basic${tri}</button>
          <div class="prop"><label for="wname">Widget Name</label><div class="combo plain"><input id="wname" type="text"><span class="drop center">${chevron}</span></div></div>
          <div class="ticks">
            <label class="tick"><input type="checkbox" checked>Enabled</label>
            <label class="tick"><input type="checkbox" checked>Visible Widget</label>
          </div>
          <button class="sec">Advanced${tri}</button>
          <div class="prop"><label for="text">Text</label><div class="caretbox"><input class="txt" id="text" type="text" value="YES"><span class="cur"></span></div></div>
        </div>
      </aside>`;
  }

  render() {
    return html`<div class="window">
      <header class="title">${logo(20)}<span class="caption">FineReport 10.0 stable 2020-02-27 @本地[Local Directory]   D:\\FineReport_10.0_en\\webapps\\webroot\\WEB-INF\\reportlets/WorkBook2.cpt</span>
        <div class="grp"><button class="wbtn" aria-label="Minimize">${ico(12, 12, svg`<path d="M0 6.500H12" stroke="#000"/>`)}</button><button class="wbtn" aria-label="Maximize">${ico(12, 12, svg`<path d="M.5.5H11.500V11.500H.5Z" stroke="#000"/>`)}</button><button class="wbtn" aria-label="Close">${ico(12, 12, svg`<path d="M0 0 12 12M12 0 0 12" stroke="#000"/>`)}</button></div></header>
      <nav class="menu">${["File", "Template", "Insert", "Cell(C)", "Server", "Help"].map((m) => html`<button>${m}</button>`)}<span class="grow"></span>
        <button class="login">${ico(22, 22, svg`<circle cx="9.500" cy="10" r="8" stroke="#444" stroke-width="1.800"/><path stroke="#444" stroke-width="2.500" d="M15 15.500 20.500 20.500"/>`)}Not Logged In</button></nav>
      <div class="body">
        ${this.left()}
        <div class="vsplit">${ico(8, 12, svg`<path fill="#a3a3a3" d="M7 0V12L1 6Z"/>`)}<span class="grip">${ico(5, 8, svg`<path stroke="#aaa" d="M.5 0V8M3.500 0V8"/>`)}</span></div>
        ${this.center()}${this.right()}
      </div>
      <svg class="notes" width="1373" height="500" fill="none" aria-hidden="true">
        <g stroke="#fb4543" stroke-width="3"><rect x="1021.500" y="225.500" width="38" height="34"/><rect x="893.500" y="369.500" width="92" height="26"/><rect x="1075.500" y="387.500" width="288" height="33"/>
        <path d="M967 369 1023 268M1058 261 1077 378"/></g>
        <path fill="#fb4543" d="M1026 260 1026 271 1017 266ZM1079 386 1073 376 1083 374Z"/>
      </svg>
    </div>`;
  }
}
